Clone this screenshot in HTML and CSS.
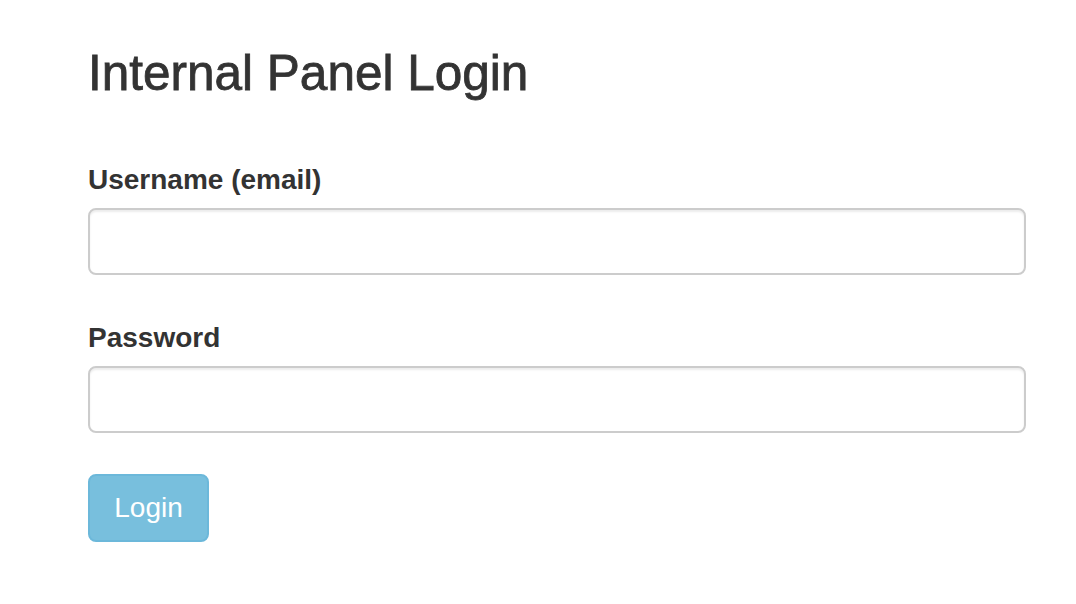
FILE: index.html
```html
<!DOCTYPE html>
<html>
<head>
<meta charset="utf-8">
<link rel="stylesheet" href="styles.css">
<title>Internal Panel Login</title>
</head>
<body>
<div class="container">
  <h3 class="title">Internal Panel Login</h3>
  <form class="form">
    <div class="form-group">
      <label class="label" for="u">Username (email)</label>
      <input class="input" id="u" type="text">
    </div>
    <div class="form-group">
      <label class="label" for="p">Password</label>
      <input class="input" id="p" type="password">
    </div>
    <button class="btn" type="button">Login</button>
  </form>
</div>
</body>
</html>
```
FILE: styles.css
```css
html, body {
  margin: 0;
  padding: 0;
  background: #fff;
}
body {
  font-family: "Liberation Sans", Arial, Helvetica, sans-serif;
  color: #333;
}
.container {
  padding: 46px 50px 0 88px;
}
.title {
  margin: 0 0 61px;
  font-size: 49.5px;
  line-height: 53px;
  font-weight: 400;
  color: #333;
  -webkit-text-stroke: 0.8px #333;
}
.form {
  display: flex;
  flex-direction: column;
}
.form-group {
  display: flex;
  flex-direction: column;
  margin-bottom: 42px;
}
.form-group + .form-group .label {
  margin-top: 1px;
}
.label {
  font-size: 28px;
  font-weight: 700;
  line-height: 40px;
  margin-bottom: 8px;
}
.input {
  box-sizing: border-box;
  height: 67px;
  width: 100%;
  border: 2px solid #ccc;
  border-radius: 8px;
  box-shadow: inset 0 2px 2px rgba(0,0,0,.075);
  background: #fff;
  outline: none;
  margin: 0;
}
.btn {
  align-self: flex-start;
  box-sizing: border-box;
  width: 121px;
  height: 68px;
  margin-top: -1px;
  border: 2px solid #6cb8da;
  border-radius: 8px;
  background: #78bfdd;
  color: #fff;
  font-family: "Liberation Sans", Arial, Helvetica, sans-serif;
  font-size: 28px;
  line-height: 40px;
  padding: 0;
}
```
